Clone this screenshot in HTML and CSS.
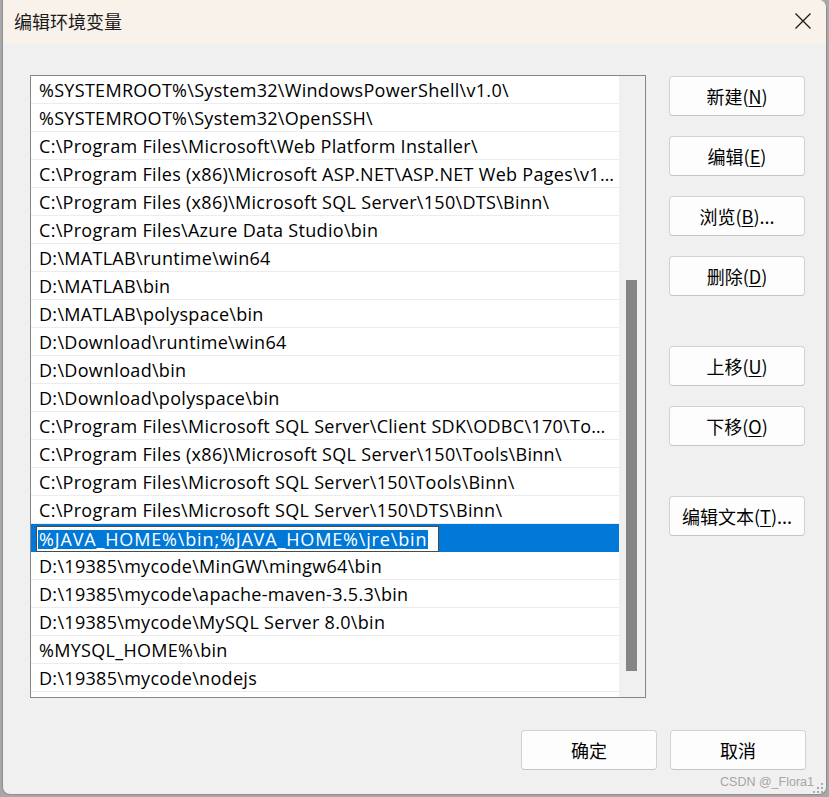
FILE: index.html
```html
<!DOCTYPE html>
<html lang="zh-CN">
<head>
<meta charset="utf-8">
<title>编辑环境变量</title>
<link rel="stylesheet" href="styles.css">
</head>
<body>
<div class="dialog">
  <div class="titlebar">
    <span class="title">编辑环境变量</span>
    <span class="close">
      <svg width="16" height="16" viewBox="0 0 16 16"><path d="M0.5 0.5 L15.5 15.5 M15.5 0.5 L0.5 15.5" stroke="#1a1a1a" stroke-width="1.3" fill="none"/></svg>
    </span>
  </div>
  <div class="content">
    <div class="main">
      <div class="listbox">
        <div class="rows">
          <div class="row">%SYSTEMROOT%\System32\WindowsPowerShell\v1.0\</div>
          <div class="row">%SYSTEMROOT%\System32\OpenSSH\</div>
          <div class="row">C:\Program Files\Microsoft\Web Platform Installer\</div>
          <div class="row">C:\Program Files (x86)\Microsoft ASP.NET\ASP.NET Web Pages\v1.0\</div>
          <div class="row">C:\Program Files (x86)\Microsoft SQL Server\150\DTS\Binn\</div>
          <div class="row">C:\Program Files\Azure Data Studio\bin</div>
          <div class="row">D:\MATLAB\runtime\win64</div>
          <div class="row">D:\MATLAB\bin</div>
          <div class="row">D:\MATLAB\polyspace\bin</div>
          <div class="row">D:\Download\runtime\win64</div>
          <div class="row">D:\Download\bin</div>
          <div class="row">D:\Download\polyspace\bin</div>
          <div class="row">C:\Program Files\Microsoft SQL Server\Client SDK\ODBC\170\Tools\Binn\</div>
          <div class="row">C:\Program Files (x86)\Microsoft SQL Server\150\Tools\Binn\</div>
          <div class="row">C:\Program Files\Microsoft SQL Server\150\Tools\Binn\</div>
          <div class="row">C:\Program Files\Microsoft SQL Server\150\DTS\Binn\</div>
          <div class="row selected">
            <div class="editbox"><span class="sel">%JAVA_HOME%\bin;%JAVA_HOME%\jre\bin</span></div>
          </div>
          <div class="row">D:\19385\mycode\MinGW\mingw64\bin</div>
          <div class="row">D:\19385\mycode\apache-maven-3.5.3\bin</div>
          <div class="row">D:\19385\mycode\MySQL Server 8.0\bin</div>
          <div class="row">%MYSQL_HOME%\bin</div>
          <div class="row">D:\19385\mycode\nodejs</div>
        </div>
        <div class="scrollbar"><div class="thumb"></div></div>
      </div>
      <div class="side">
        <div class="group">
          <button class="btn">新建(<u>N</u>)</button>
          <button class="btn">编辑(<u>E</u>)</button>
          <button class="btn">浏览(<u>B</u>)...</button>
          <button class="btn">删除(<u>D</u>)</button>
        </div>
        <div class="group">
          <button class="btn">上移(<u>U</u>)</button>
          <button class="btn">下移(<u>O</u>)</button>
        </div>
        <div class="group">
          <button class="btn">编辑文本(<u>T</u>)...</button>
        </div>
      </div>
    </div>
    <div class="footer">
      <button class="btn">确定</button>
      <button class="btn">取消</button>
    </div>
  </div>
  <div class="watermark">CSDN @_Flora1</div>
  <svg class="grip" width="10" height="10" viewBox="0 0 10 10">
    <rect x="8" y="0" width="2" height="2" fill="#a9a9a9"/>
    <rect x="4" y="4" width="2" height="2" fill="#a9a9a9"/>
    <rect x="8" y="4" width="2" height="2" fill="#a9a9a9"/>
    <rect x="0" y="8" width="2" height="2" fill="#a9a9a9"/>
    <rect x="4" y="8" width="2" height="2" fill="#a9a9a9"/>
    <rect x="8" y="8" width="2" height="2" fill="#a9a9a9"/>
  </svg>
</div>
</body>
</html>
```
FILE: styles.css
```css
* { box-sizing: border-box; }
html, body {
  margin: 0;
  padding: 0;
  background: #a7a7a7;
  height: 797px;
  overflow: hidden;
}
.dialog {
  position: relative;
  margin-left: 2px;
  width: 825px;
  height: 795px;
  background: #f0f0f0;
  border: 1px solid #8e8e8e;
  border-top: none;
  border-radius: 0 8px 8px 8px;
  overflow: hidden;
  font-family: "Open Sans", "Noto Sans CJK SC", sans-serif;
  color: #000;
}
.titlebar {
  height: 44px;
  background: #f9f2ea;
  display: flex;
  align-items: center;
  justify-content: space-between;
  padding: 0 15px 0 11px;
}
.title {
  font-family: "Noto Sans CJK SC", sans-serif;
  font-size: 18px;
  line-height: 24px;
  color: #1a1a1a;
  margin-top: -2px;
}
.close { display: flex; margin-top: -2px; }
.content {
  padding: 31px 20px 0 27px;
}
.main {
  display: flex;
  gap: 23px;
}
.listbox {
  width: 616px;
  height: 623px;
  border: 1px solid #828790;
  background: #fff;
  display: flex;
}
.rows {
  width: 588px;
  display: flex;
  flex-direction: column;
}
.row {
  height: 28px;
  border-bottom: 1px solid #ececec;
  padding: 0 3px 0 8px;
  font-size: 18px;
  line-height: 28px;
  white-space: nowrap;
  overflow: hidden;
  text-overflow: ellipsis;
  letter-spacing: 0.3px;
}
.row.selected {
  background: #0078d7;
  border-bottom-color: #0078d7;
  padding: 0;
  overflow: visible;
}
.editbox {
  margin: 2px 0 0 5px;
  width: 403px;
  height: 26px;
  background: #fff;
  border: 1px solid #4a4a4a;
  display: flex;
  align-items: center;
  padding-left: 1px;
}
.sel {
  background: #0078d7;
  color: #fff;
  line-height: 19px;
  letter-spacing: 0.85px;
  padding: 0 1px 0 1px;
}
.scrollbar {
  width: 26px;
  background: #f0f0f0;
  padding: 204px 0 0 7px;
}
.thumb {
  width: 11px;
  height: 391px;
  background: #858585;
}
.side {
  display: flex;
  flex-direction: column;
  gap: 50px;
  padding-top: 1px;
}
.group {
  display: flex;
  flex-direction: column;
  gap: 20px;
}
.btn {
  width: 136px;
  height: 40px;
  background: #fdfdfd;
  border: 1px solid #d2d2d2;
  border-bottom-color: #c4c4c4;
  border-radius: 4px;
  font-family: "Noto Sans CJK SC", sans-serif;
  font-size: 18px;
  line-height: 22px;
  color: #000;
  padding: 0;
}
.btn u { text-underline-offset: 2px; }
.footer {
  display: flex;
  justify-content: flex-end;
  gap: 13px;
  margin-top: 32px;
}
.watermark {
  position: absolute;
  right: 12px;
  bottom: 5px;
  font-family: "Liberation Sans", sans-serif;
  font-size: 12.5px;
  line-height: 14px;
  color: #a6a6a6;
}
.grip {
  position: absolute;
  right: 3px;
  bottom: 1px;
}
```
